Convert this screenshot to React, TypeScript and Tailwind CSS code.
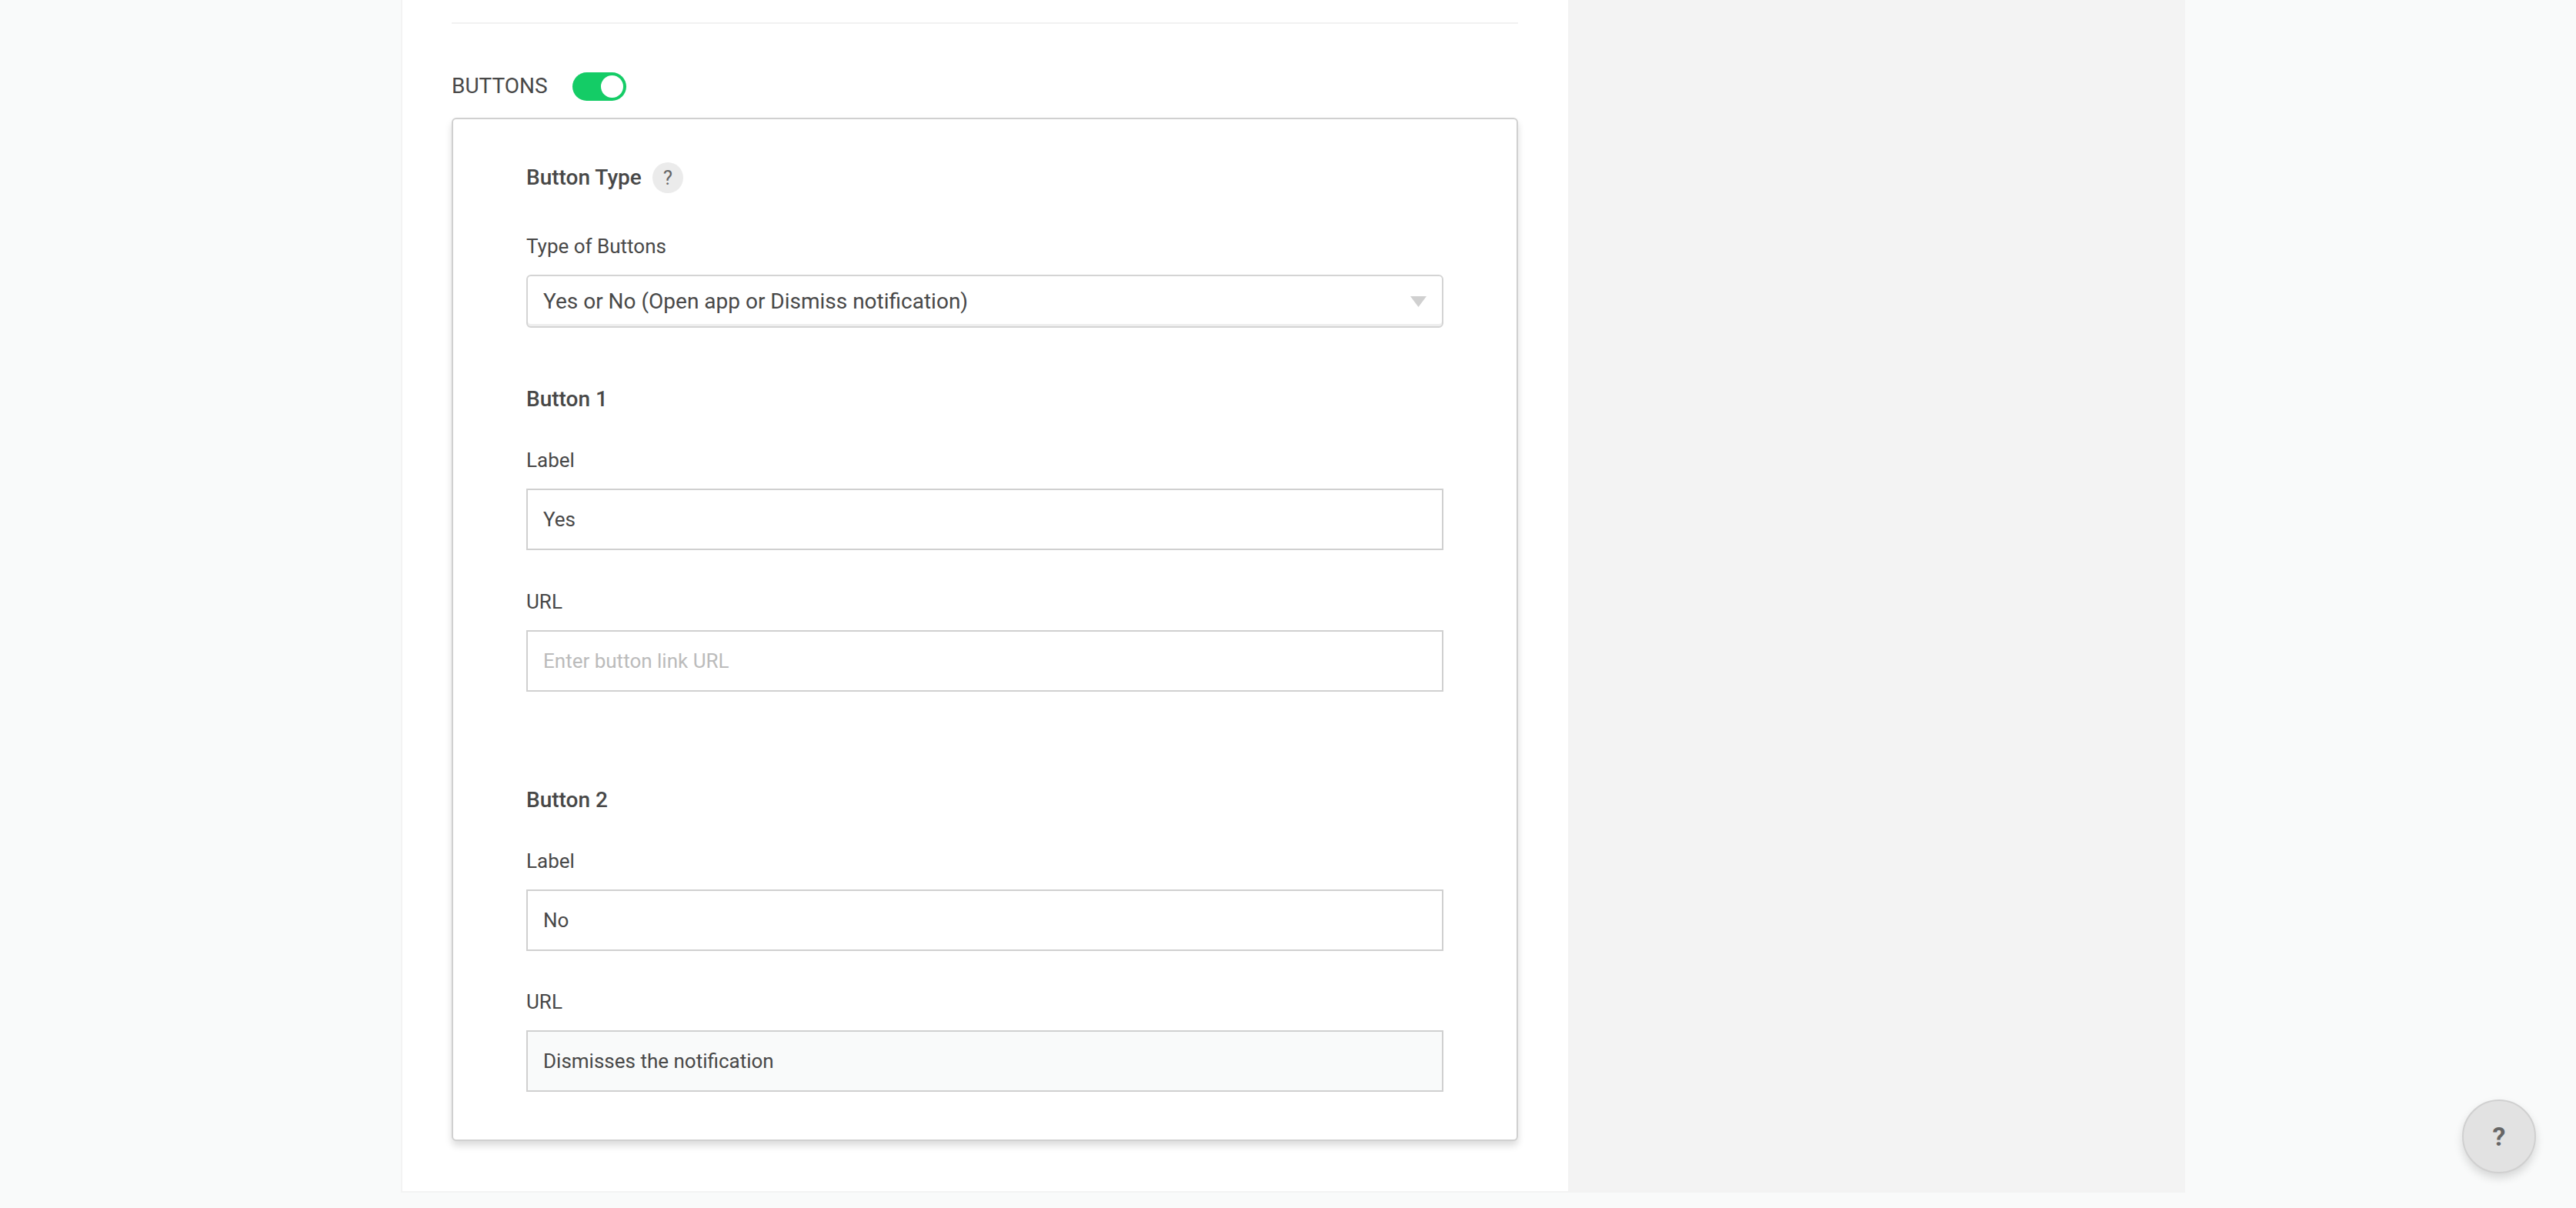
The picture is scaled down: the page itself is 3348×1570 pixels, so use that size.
import React from "react";

const Field: React.FC<{ label: string; value?: string; placeholder?: string; disabled?: boolean; className?: string }> = ({
  label,
  value,
  placeholder,
  disabled,
  className,
}) => (
  <div className={className}>
    <label className="block h-[34px] text-[26px] leading-[34px] text-[#484848]">{label}</label>
    <input
      readOnly
      value={value ?? ""}
      placeholder={placeholder}
      className={`mt-[20px] block h-[80px] w-full border-2 border-[#d0d0d0] px-[20px] text-[26px] text-[#484848] outline-none placeholder:text-[#bbb] ${
        disabled ? "bg-[#f9fafa]" : "bg-white"
      }`}
    />
  </div>
);

export default function App() {
  return (
    <div className="relative h-[1570px] overflow-hidden bg-[#f9fafa] pl-[521px] font-['Roboto',sans-serif]">
      <div className="flex h-[1550px] w-[2319px] items-stretch">
        {/* Main settings column */}
        <div className="w-[1517px] border-x-2 border-b-2 border-x-[#f3f3f3] border-b-[#f3f3f3] border-r-0 bg-white px-[64px] pt-[29px]">
          <div className="h-[2px] w-[1386px] bg-[#f2f2f2]" />

          <div className="mt-[62px] flex h-[38px] items-center">
            <span className="text-[28px] leading-[38px] text-[#484848]">BUTTONS</span>
            <div className="ml-[32px] flex h-[37px] w-[70px] items-center justify-end rounded-full bg-[#14cc66] pr-[4px]">
              <div className="h-[29px] w-[29px] rounded-full bg-white" />
            </div>
          </div>

          <div className="mt-[22px] h-[1330px] w-[1386px] rounded-[6px] border-2 border-[#d0d0d0] bg-white px-[95px] pt-[56px] shadow-[0_6px_10px_rgba(0,0,0,0.14)]">
            <div className="flex h-[40px] items-center">
              <span className="text-[28px] font-medium leading-[40px] text-[#484848]">Button Type</span>
              <span className="ml-[14px] flex h-[40px] w-[40px] items-center justify-center rounded-full bg-[#ebebeb] text-[26px] text-[#666]">
                ?
              </span>
            </div>

            <div className="mt-[52px] h-[34px] text-[26px] leading-[34px] text-[#484848]">Type of Buttons</div>
            <div className="mt-[20px] flex h-[69px] items-center justify-between rounded-[6px] border-2 border-[#d4d4d4] bg-white pl-[20px] pr-[20px] shadow-[inset_0_-3px_0_#eeeeee]">
              <span className="text-[28px] text-[#484848]">Yes or No (Open app or Dismiss notification)</span>
              <svg width="21" height="14" viewBox="0 0 21 14">
                <path d="M0 0H21L10.5 14Z" fill="#d0d0d0" />
              </svg>
            </div>

            <div className="mt-[74px] h-[38px] text-[28px] font-medium leading-[38px] text-[#484848]">Button 1</div>
            <Field className="mt-[43px]" label="Label" value="Yes" />
            <Field className="mt-[50px]" label="URL" placeholder="Enter button link URL" />

            <div className="mt-[122px] h-[38px] text-[28px] font-medium leading-[38px] text-[#484848]">Button 2</div>
            <Field className="mt-[43px]" label="Label" value="No" />
            <Field className="mt-[49px]" label="URL" value="Dismisses the notification" disabled />
          </div>
        </div>

        {/* Empty preview column */}
        <div className="w-[802px] bg-[#f3f3f3]" />
      </div>

      {/* Floating help */}
      <button className="absolute left-[3200px] top-[1429px] flex h-[96px] w-[96px] items-center justify-center rounded-full border-2 border-[#d0d0d0] bg-[#e2e2e2] text-[34px] font-bold text-[#666] shadow-[0_6px_12px_rgba(0,0,0,0.14)]">
        ?
      </button>
    </div>
  );
}
